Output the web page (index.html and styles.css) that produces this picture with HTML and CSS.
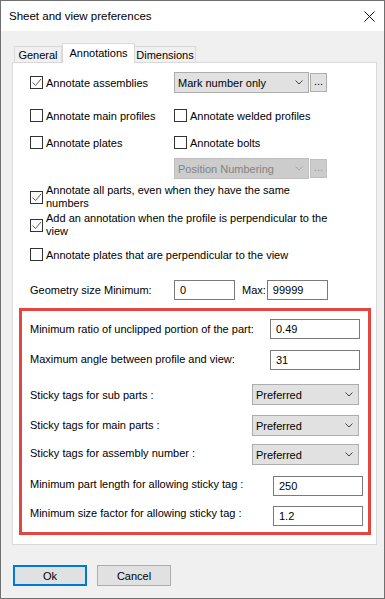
FILE: index.html
```html
<!DOCTYPE html>
<html>
<head>
<meta charset="utf-8">
<link rel="stylesheet" href="styles.css">
</head>
<body>
<div class="window">
  <div class="titlebar">
    <span class="title">Sheet and view preferences</span>
    <svg class="close" width="11" height="11" viewBox="0 0 11 11"><path d="M0.5 0.5 L10.5 10.5 M10.5 0.5 L0.5 10.5" stroke="#111" stroke-width="1" fill="none"/></svg>
  </div>
  <div class="content">
    <div class="tabs">
      <div class="tab tab-general">General</div>
      <div class="tab tab-active">Annotations</div>
      <div class="tab tab-dim">Dimensions</div>
    </div>
    <div class="panel">
      <div class="row two-col h21">
        <div class="chk"><span class="box"><svg width="11" height="11" viewBox="0 0 11 11"><polyline points="1.5,5.5 4.5,8.5 10,2" fill="none" stroke="#5a5a5a" stroke-width="1"/></svg></span>Annotate assemblies</div>
        <div class="combo-group">
          <div class="combo"><span>Mark number only</span><svg width="8" height="5" viewBox="0 0 8 5"><polyline points="0.5,0.5 4,4 7.5,0.5" fill="none" stroke="#444" stroke-width="1"/></svg></div>
          <div class="dots">...</div>
        </div>
      </div>
      <div class="row two-col h21 mt12">
        <div class="chk"><span class="box"></span>Annotate main profiles</div>
        <div class="chk"><span class="box"></span>Annotate welded profiles</div>
      </div>
      <div class="row two-col h21 mt6">
        <div class="chk"><span class="box"></span>Annotate plates</div>
        <div class="chk"><span class="box"></span>Annotate bolts</div>
      </div>
      <div class="row two-col h21 mt5">
        <div></div>
        <div class="combo-group">
          <div class="combo disabled"><span>Position Numbering</span><svg width="8" height="5" viewBox="0 0 8 5"><polyline points="0.5,0.5 4,4 7.5,0.5" fill="none" stroke="#a8a8a8" stroke-width="1"/></svg></div>
          <div class="dots disabled">...</div>
        </div>
      </div>
      <div class="row mt5">
        <div class="chk multi"><span class="box"><svg width="11" height="11" viewBox="0 0 11 11"><polyline points="1.5,5.5 4.5,8.5 10,2" fill="none" stroke="#5a5a5a" stroke-width="1"/></svg></span><span class="wrap">Annotate all parts, even when they have the same numbers</span></div>
      </div>
      <div class="row mt2">
        <div class="chk multi"><span class="box"><svg width="11" height="11" viewBox="0 0 11 11"><polyline points="1.5,5.5 4.5,8.5 10,2" fill="none" stroke="#5a5a5a" stroke-width="1"/></svg></span><span class="wrap">Add an annotation when the profile is perpendicular to the view</span></div>
      </div>
      <div class="row h21 mt6">
        <div class="chk"><span class="box"></span>Annotate plates that are perpendicular to the view</div>
      </div>
      <div class="row two-col h20 mt15">
        <div class="lbl">Geometry size Minimum:</div>
        <div class="geo">
          <div class="field w61">0</div>
          <span class="max">Max:</span>
          <div class="field w61">99999</div>
        </div>
      </div>
      <div class="redbox">
        <div class="frow ca h20">
          <div class="lbl">Minimum ratio of unclipped portion of the part:</div>
          <div class="field w90">0.49</div>
        </div>
        <div class="frow ca h20 mt11">
          <div class="lbl up1">Maximum angle between profile and view:</div>
          <div class="field w90">31</div>
        </div>
        <div class="frow cb h21 mt14">
          <div class="lbl">Sticky tags for sub parts :</div>
          <div class="combo w107"><span>Preferred</span><svg width="8" height="5" viewBox="0 0 8 5"><polyline points="0.5,0.5 4,4 7.5,0.5" fill="none" stroke="#444" stroke-width="1"/></svg></div>
        </div>
        <div class="frow cb h21 mt10">
          <div class="lbl up1">Sticky tags for main parts :</div>
          <div class="combo w107"><span>Preferred</span><svg width="8" height="5" viewBox="0 0 8 5"><polyline points="0.5,0.5 4,4 7.5,0.5" fill="none" stroke="#444" stroke-width="1"/></svg></div>
        </div>
        <div class="frow cb h21 mt8">
          <div class="lbl up2">Sticky tags for assembly number :</div>
          <div class="combo w107"><span>Preferred</span><svg width="8" height="5" viewBox="0 0 8 5"><polyline points="0.5,0.5 4,4 7.5,0.5" fill="none" stroke="#444" stroke-width="1"/></svg></div>
        </div>
        <div class="frow cc h20 mt11">
          <div class="lbl up2">Minimum part length for allowing sticky tag :</div>
          <div class="field w90">250</div>
        </div>
        <div class="frow cc h20 mt10">
          <div class="lbl up3">Minimum size factor for allowing sticky tag :</div>
          <div class="field w90">1.2</div>
        </div>
      </div>
    </div>
    <div class="buttons">
      <div class="btn btn-default">Ok</div>
      <div class="btn">Cancel</div>
    </div>
  </div>
</div>
</body>
</html>
```

FILE: styles.css
```css
* { box-sizing: border-box; }
html, body { margin: 0; padding: 0; }
body {
  font-family: "Liberation Sans", Arial, sans-serif;
  font-size: 11px;
  color: #000;
  background: #f0f0f0;
}
.window {
  width: 385px;
  height: 599px;
  border: 1px solid #707070;
  background: #f0f0f0;
  display: flex;
  flex-direction: column;
}
.titlebar {
  height: 30px;
  background: #fff;
  display: flex;
  align-items: center;
  justify-content: space-between;
  padding: 0 9px 0 8px;
  flex: none;
}
.title { font-size: 11.5px; color: #000; }
.close { display: block; }

.content { padding: 12px 0 0 11px; }

.tabs {
  display: flex;
  align-items: flex-end;
  height: 19px;
  margin-left: 2px;
}
.tab {
  height: 16px;
  border: 1px solid #d9d9d9;
  border-bottom: none;
  background: #f0f0f0;
  display: flex;
  align-items: center;
  justify-content: center;
}
.tab-general { width: 48px; }
.tab-active {
  width: 73px;
  height: 20px;
  background: #fff;
  margin-bottom: -1px;
  position: relative;
  z-index: 1;
  padding-bottom: 2px;
}
.tab-dim { width: 62px; margin-left: -1px; }

.panel {
  width: 365px;
  height: 483px;
  background: #fff;
  border: 1px solid #d9d9d9;
  padding-top: 9px;
}
.row { padding-left: 17px; display: flex; align-items: center; }
.two-col { display: grid; grid-template-columns: 144px auto; align-items: center; }
.h20 { height: 20px; }
.h21 { height: 21px; }
.mt2 { margin-top: 2px; }
.mt5 { margin-top: 5px; }
.mt6 { margin-top: 6px; }
.mt8 { margin-top: 8px; }
.mt10 { margin-top: 10px; }
.mt11 { margin-top: 11px; }
.mt12 { margin-top: 12px; }
.mt14 { margin-top: 14px; }
.mt15 { margin-top: 15px; }

.chk { display: flex; align-items: center; white-space: nowrap; }
.chk.multi { white-space: normal; }
.box {
  width: 13px;
  height: 13px;
  border: 1px solid #333;
  background: #fff;
  margin-right: 3px;
  flex: none;
  display: block;
}
.box svg { display: block; }
.wrap { display: block; width: 285px; line-height: 13px; }

.combo-group { display: flex; align-items: center; }
.combo {
  width: 135px;
  height: 21px;
  background: #e1e1e1;
  border: 1px solid #adadad;
  display: flex;
  align-items: center;
  justify-content: space-between;
  padding: 0 5px 0 3px;
}
.combo svg { display: block; }
.combo.disabled {
  background: #cccccc;
  border-color: #bfbfbf;
  color: #838383;
}
.w107 { width: 107px; }
.dots {
  width: 17px;
  height: 19px;
  margin-left: 1px;
  background: #e1e1e1;
  border: 1px solid #adadad;
  display: flex;
  align-items: center;
  justify-content: center;
  line-height: 1;
  padding-bottom: 2px;
}
.dots.disabled {
  background: #cccccc;
  border-color: #bfbfbf;
  color: #9a9a9a;
}

.lbl { white-space: nowrap; }
.geo { display: flex; align-items: center; }
.max { margin-left: 7px; margin-right: 1px; }
.field {
  height: 20px;
  background: #fff;
  border: 1px solid #7a7a7a;
  padding-left: 5px;
  display: flex;
  align-items: center;
}
.w61 { width: 61px; }
.w90 { width: 90px; }

.redbox {
  margin-top: 8px;
  margin-left: 6px;
  width: 352px;
  height: 227px;
  border: 3px solid #e5453d;
  padding: 8px 0 0 8px;
}
.frow { display: grid; align-items: center; }
.ca { grid-template-columns: 240px 90px; }
.cb { grid-template-columns: 222px 107px; }
.cc { grid-template-columns: 243px 90px; }
.up1 { padding-bottom: 2px; }
.up2 { padding-bottom: 4px; }
.up3 { padding-bottom: 6px; }

.buttons {
  display: flex;
  gap: 10px;
  margin-top: 20px;
  margin-left: 1px;
}
.btn {
  width: 74px;
  height: 21px;
  background: #e1e1e1;
  border: 1px solid #adadad;
  display: flex;
  align-items: center;
  justify-content: center;
}
.btn-default { border: 2px solid #0078d7; }
```
